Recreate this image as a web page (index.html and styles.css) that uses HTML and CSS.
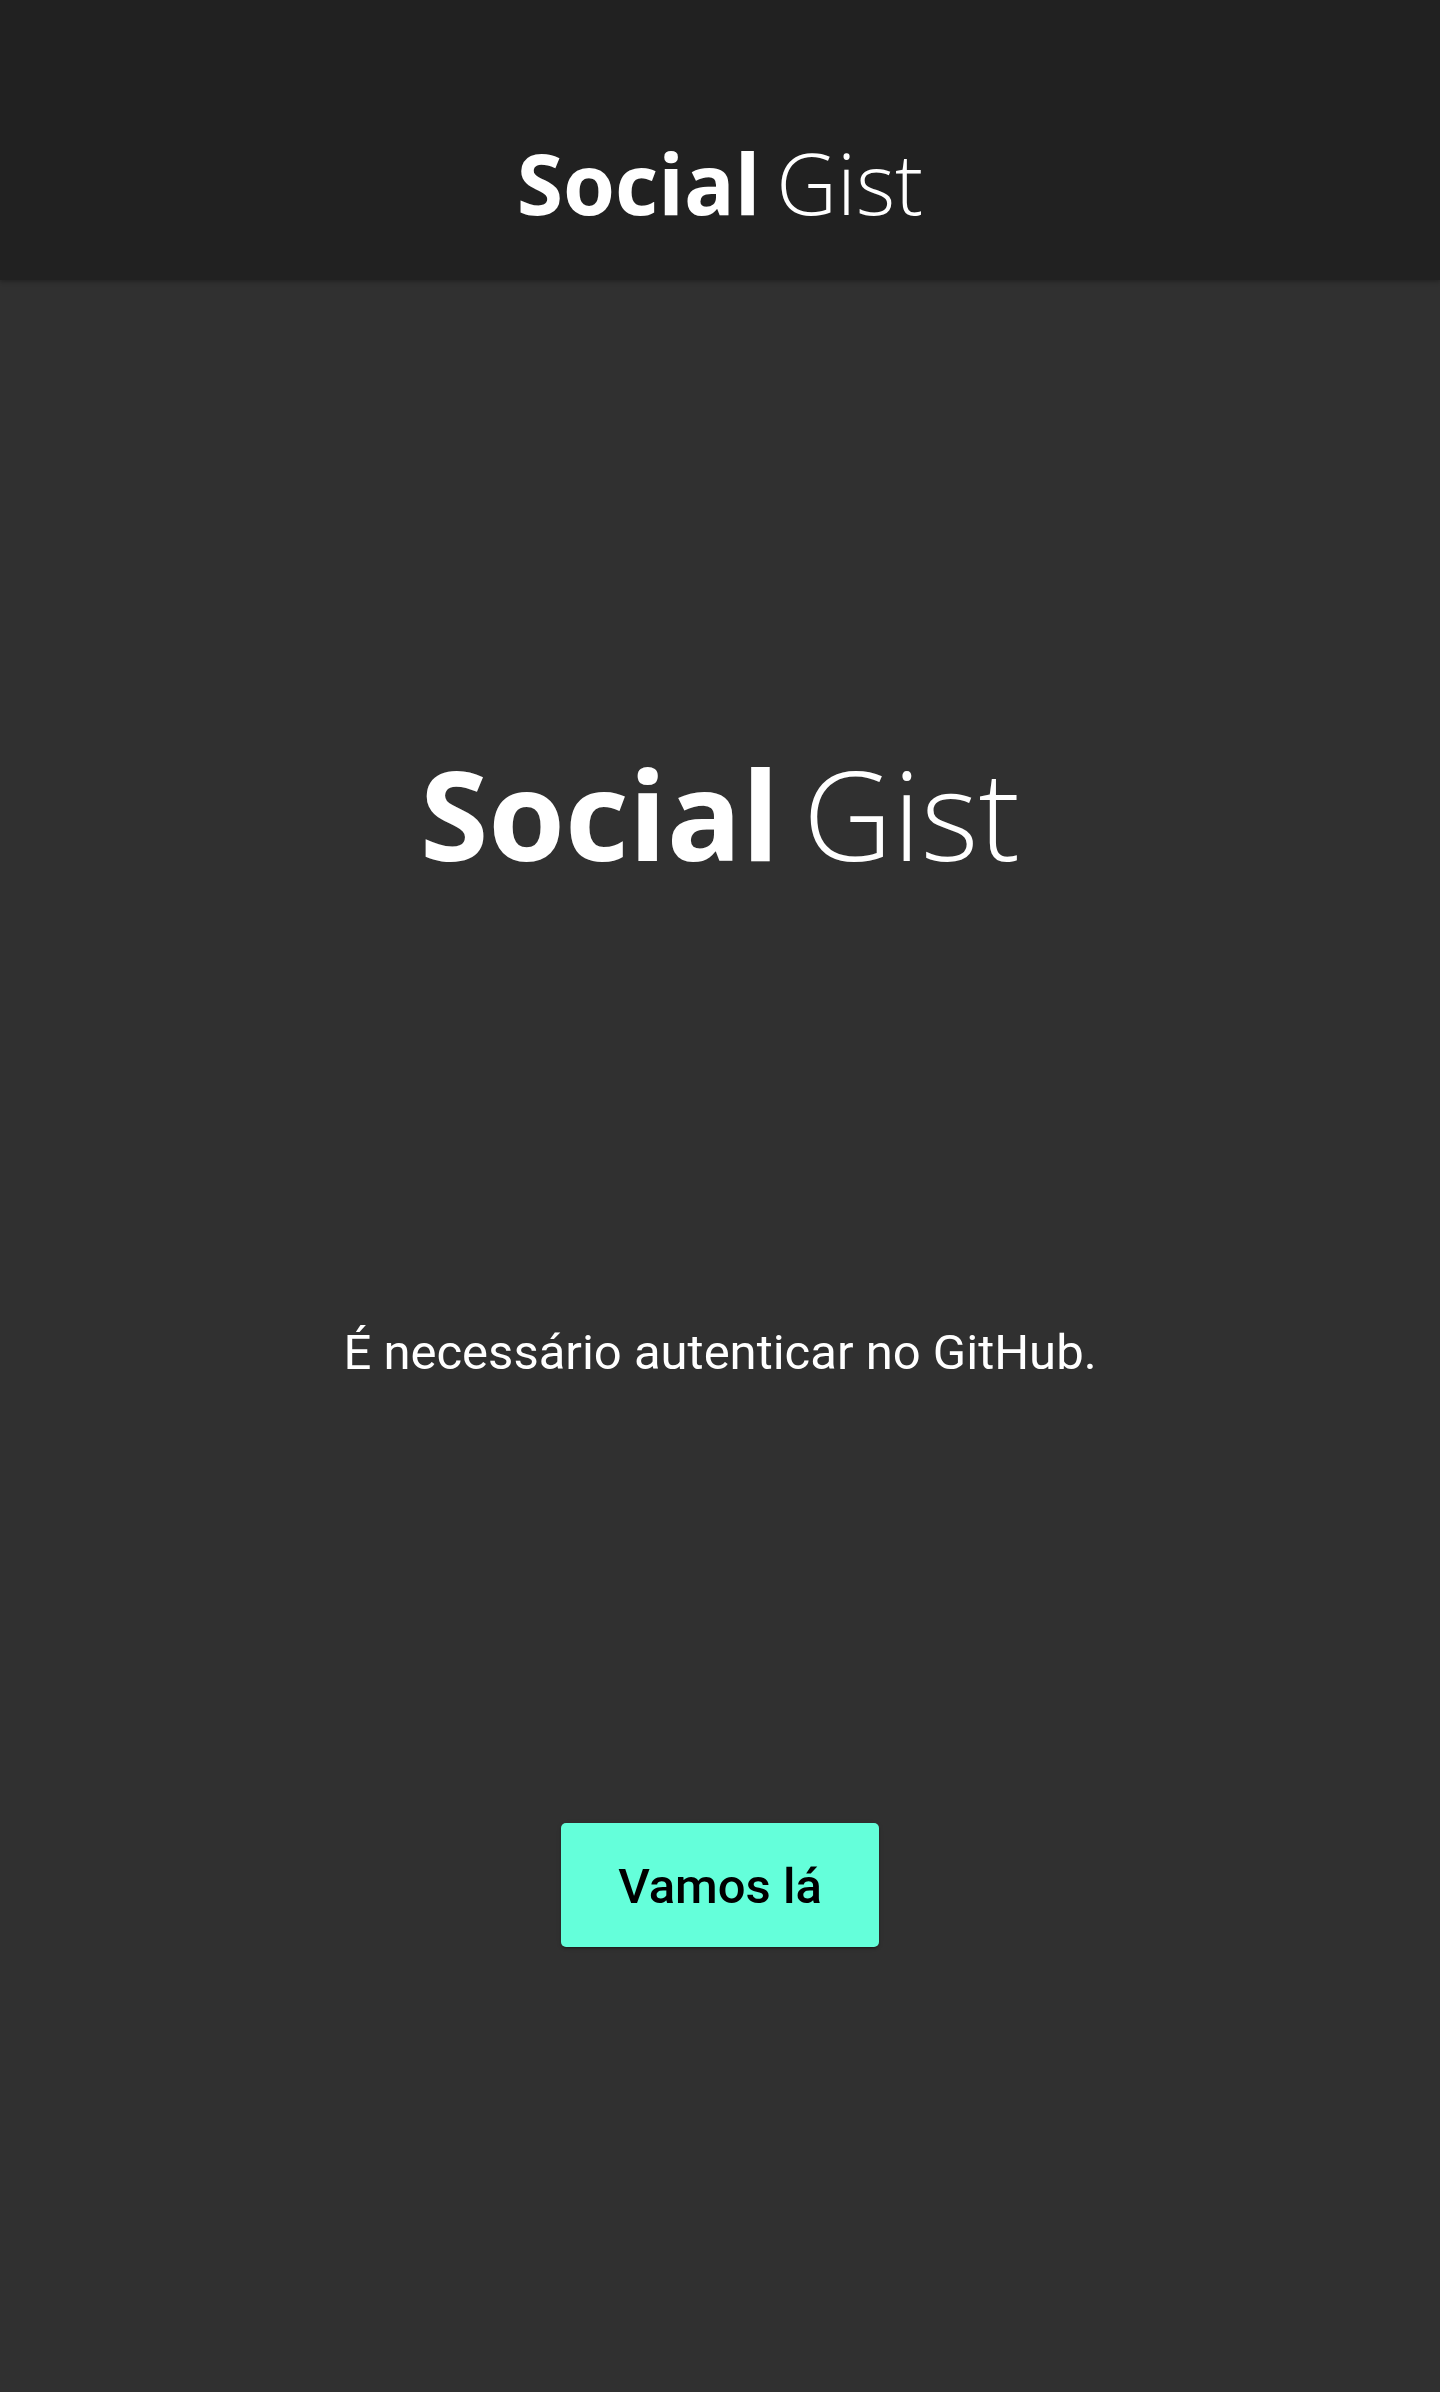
FILE: index.html
```html
<!DOCTYPE html>
<html lang="pt">
<head>
<meta charset="utf-8">
<title>Social Gist</title>
<link rel="stylesheet" href="styles.css">
</head>
<body>
<header class="app-bar">
  <div class="brand brand-small"><span class="brand-bold">Social</span><span class="brand-light">Gist</span></div>
</header>
<main class="content">
  <div class="brand brand-large"><span class="brand-bold">Social</span><span class="brand-light">Gist</span></div>
  <p class="message">É necessário autenticar no GitHub.</p>
  <button class="cta" type="button">Vamos lá</button>
</main>
</body>
</html>
```
FILE: styles.css
```css
html, body {
  margin: 0;
  padding: 0;
}
body {
  background: #303030;
  color: #ffffff;
  min-height: 2392px;
  font-family: "Roboto", "Liberation Sans", sans-serif;
}
.app-bar {
  box-sizing: border-box;
  height: 280px;
  padding-top: 141px;
  background: #212121;
  box-shadow: 0 2px 4px rgba(0, 0, 0, 0.25);
  position: relative;
  z-index: 1;
}
.brand {
  font-family: "Open Sans", "DejaVu Sans", sans-serif;
  text-align: center;
  line-height: 1;
  white-space: nowrap;
}
.brand-bold {
  font-weight: 700;
}
.brand-light {
  font-weight: 300;
  margin-left: 0.19em;
}
.brand-small {
  font-size: 84px;
}
.brand-large {
  font-size: 124px;
}
.content {
  display: flex;
  flex-direction: column;
  align-items: center;
  padding-top: 471px;
}
.message {
  margin: 453px 0 0;
  font-size: 49px;
  line-height: 1;
  font-weight: 400;
}
.cta {
  margin-top: 446px;
  width: 318px;
  height: 124px;
  border: none;
  border-radius: 5px;
  background: #64ffda;
  color: #000000;
  font-family: "Roboto", "Liberation Sans", sans-serif;
  font-size: 49px;
  font-weight: 500;
  line-height: 1;
  padding: 2px 0 0;
  box-shadow: 0 3px 1px -2px rgba(0,0,0,.2), 0 2px 2px 0 rgba(0,0,0,.14), 0 1px 5px 0 rgba(0,0,0,.12);
  cursor: pointer;
}
```
